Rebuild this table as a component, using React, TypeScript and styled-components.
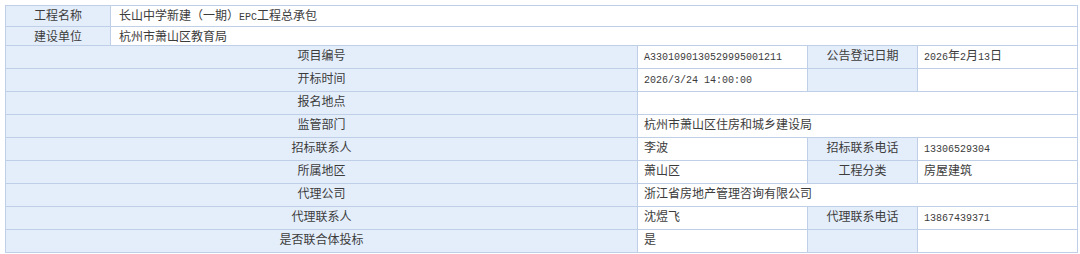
import React from 'react'
import styled, { createGlobalStyle } from 'styled-components'

const GlobalStyle = createGlobalStyle`
  html, body {
    margin: 0;
    padding: 0;
    background: #ffffff;
  }
  body {
    font-family: "Noto Sans CJK SC", "Liberation Sans", sans-serif;
    font-size: 12px;
    color: #3c3c3c;
  }
`

const Page = styled.div`
  padding: 5px 3px 0 5px;
`

const InfoTable = styled.table`
  width: 1072px;
  border-collapse: collapse;
  table-layout: fixed;
  border: 1px solid #c6d5ea;
  border-left-color: #c4c9d2;
`

const Row = styled.tr<{ $tall?: boolean }>`
  height: ${(p) => (p.$tall ? '23px' : '19px')};
`

const Label = styled.td`
  background: #e4eefb;
  border: 1px solid #bfcfe7;
  text-align: center;
  vertical-align: top;
  line-height: 17px;
  padding: 0 4px;
  white-space: nowrap;
`

const Value = styled.td<{ $wide?: boolean }>`
  background: #ffffff;
  border: 1px solid #bfcfe7;
  text-align: left;
  vertical-align: top;
  line-height: 17px;
  padding: 0 ${(p) => (p.$wide ? '8px' : '6px')};
  white-space: nowrap;
  overflow: hidden;
`

// 数字 / 英文用等宽字体模拟宋体半角
const Num = styled.span`
  font-family: "Liberation Mono", monospace;
  font-size: 10px;
`

type Field = { label: string; value?: React.ReactNode; label2?: string; value2?: React.ReactNode; pair?: boolean }

const fields: Field[] = [
  { label: '项目编号', value: <Num>A3301090130529995001211</Num>, pair: true, label2: '公告登记日期', value2: <><Num>2026</Num>年<Num>2</Num>月<Num>13</Num>日</> },
  { label: '开标时间', value: <Num>2026/3/24 14:00:00</Num>, pair: true },
  { label: '报名地点' },
  { label: '监管部门', value: '杭州市萧山区住房和城乡建设局' },
  { label: '招标联系人', value: '李波', pair: true, label2: '招标联系电话', value2: <Num>13306529304</Num> },
  { label: '所属地区', value: '萧山区', pair: true, label2: '工程分类', value2: '房屋建筑' },
  { label: '代理公司', value: '浙江省房地产管理咨询有限公司' },
  { label: '代理联系人', value: '沈煜飞', pair: true, label2: '代理联系电话', value2: <Num>13867439371</Num> },
  { label: '是否联合体投标', value: '是', pair: true },
]

const App: React.FC = () => {
  return (
    <Page>
      <GlobalStyle />
      <InfoTable>
        <colgroup>
          <col style={{ width: 105 }} />
          <col style={{ width: 527 }} />
          <col style={{ width: 170 }} />
          <col style={{ width: 110 }} />
          <col style={{ width: 160 }} />
        </colgroup>
        <tbody>
          <Row>
            <Label>工程名称</Label>
            <Value $wide colSpan={4}>长山中学新建（一期）<Num>EPC</Num>工程总承包</Value>
          </Row>
          <Row>
            <Label>建设单位</Label>
            <Value $wide colSpan={4}>杭州市萧山区教育局</Value>
          </Row>
          {fields.map((f) =>
            f.pair ? (
              <Row $tall key={f.label}>
                <Label colSpan={2}>{f.label}</Label>
                <Value>{f.value}</Value>
                <Label>{f.label2}</Label>
                <Value>{f.value2}</Value>
              </Row>
            ) : (
              <Row $tall key={f.label}>
                <Label colSpan={2}>{f.label}</Label>
                <Value colSpan={3}>{f.value}</Value>
              </Row>
            )
          )}
        </tbody>
      </InfoTable>
    </Page>
  )
}

export default App
